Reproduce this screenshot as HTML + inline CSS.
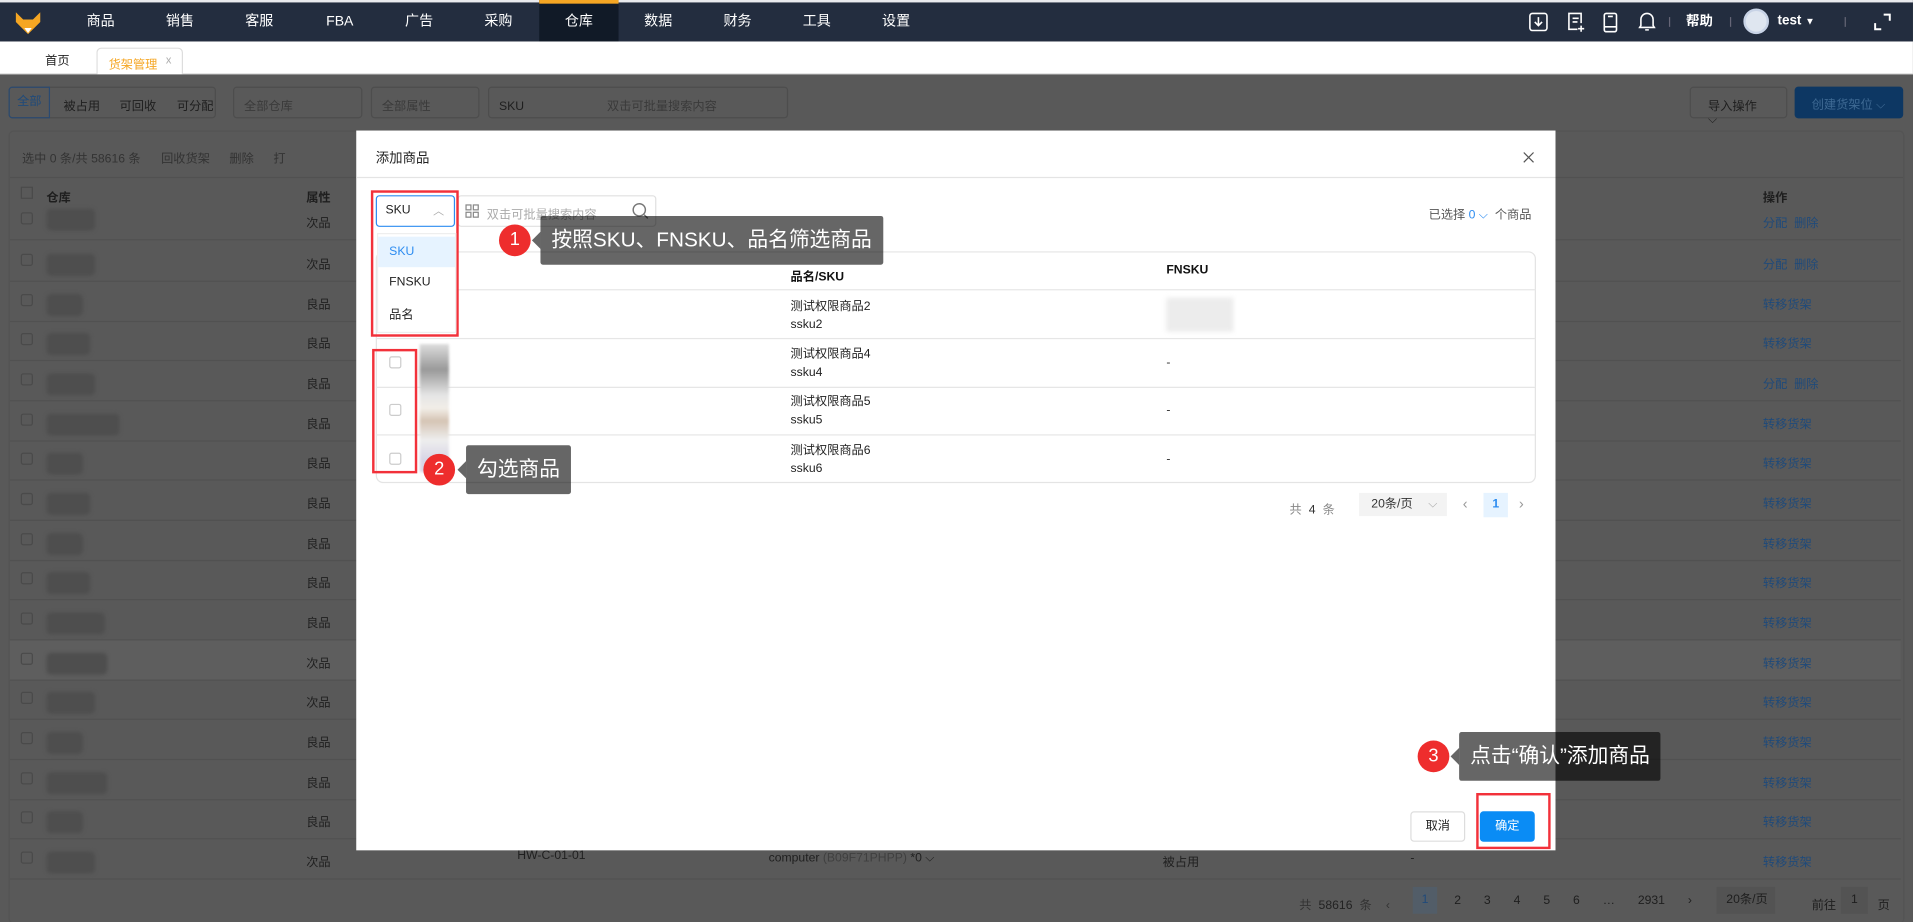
<!DOCTYPE html>
<html><head><meta charset="utf-8"><style>
*{box-sizing:border-box;margin:0;padding:0}
body{width:1913px;height:922px;overflow:hidden;background:#595959;font-family:"Liberation Sans","Noto Sans CJK SC",sans-serif}
#w{position:absolute;left:0;top:0;width:1568px;height:756px;transform:scale(1.22);transform-origin:0 0;overflow:hidden}
.a{position:absolute}
.nav{left:0;top:0;width:1568px;height:34px;background:#232d3f;border-top:2px solid #e9eaee}
.ni{position:absolute;top:0;height:32px;line-height:32px;color:#fff;font-size:11.5px;text-align:center;width:65px}
.tabs{left:0;top:34px;width:1568px;height:27px;background:#fff;border-bottom:1px solid #ddd;font-size:10px}
.ov{left:0;top:61px;width:1568px;height:695px;background:#595959}
.t{font-size:10px;color:#1e1e1e}
.bx{border:1px solid #4d4d4d;border-radius:3px}
.row{position:absolute;left:8px;width:1550px;height:32.7px;border-bottom:1px solid #515151;font-size:10px;color:#1f1f1f}
.row span{position:absolute;top:10px}
.cb{position:absolute;left:9px;top:11px;width:10px;height:10px;border:1px solid #4a4a4a;border-radius:2px}
.blur{position:absolute;left:30px;top:6px;height:18px;background:#4e4e4e;border-radius:4px;filter:blur(1.5px)}
.lk{color:#1f4a7a}
.modal{left:292px;top:107px;width:983px;height:590px;background:#fff}
.m{font-size:10px;color:#333}
.red{position:absolute;border:2px solid #f2313a}
.call{position:absolute;background:rgba(0,0,0,.6);color:#fff;font-size:17px;line-height:40px;padding:0 9px;height:40px;border-radius:2px;white-space:nowrap}
.call:before{content:"";position:absolute;left:-7px;top:13px;border:7px solid transparent;border-left:0;border-right-color:rgba(0,0,0,.6)}
.num{position:absolute;width:26px;height:26px;border-radius:50%;background:#ee2d2d;color:#fff;font-size:15px;text-align:center;line-height:26px}
</style></head><body><div id="w">
<div class="a nav">
<svg class="a" style="left:12px;top:8px" width="22" height="18" viewBox="0 0 22 18"><path d="M1 0 L7 6 L15 6 L21 0 L21 8 L11 18 L1 8Z" fill="#f5a623"/><path d="M8 13 L14 13 L11 17Z" fill="#fff"/></svg>
<div class="ni" style="left:50px">商品</div><div class="ni" style="left:115px">销售</div><div class="ni" style="left:180px">客服</div><div class="ni" style="left:246px">FBA</div><div class="ni" style="left:311px">广告</div><div class="ni" style="left:376px">采购</div>
<div class="ni" style="left:442px;background:#111a27;border-top:3px solid #f5a623;top:-2px;height:34px;line-height:30px">仓库</div>
<div class="ni" style="left:507px">数据</div><div class="ni" style="left:572px">财务</div><div class="ni" style="left:637px">工具</div><div class="ni" style="left:702px">设置</div>
<svg class="a" style="left:1253px;top:8px" width="16" height="16" viewBox="0 0 16 16" fill="none" stroke="#fff" stroke-width="1.3"><rect x="1" y="1" width="14" height="14" rx="2"/><path d="M8 4v7M5 8l3 3 3-3"/></svg>
<svg class="a" style="left:1284px;top:8px" width="16" height="17" viewBox="0 0 16 17" fill="none" stroke="#fff" stroke-width="1.3"><path d="M12 9V1H2v13h7"/><path d="M5 5h5M5 8h4M12 11v5M9.5 13.5h5"/></svg>
<svg class="a" style="left:1314px;top:8px" width="12" height="17" viewBox="0 0 12 17" fill="none" stroke="#fff" stroke-width="1.3"><rect x="1" y="1" width="10" height="15" rx="1.5"/><path d="M1 12h10M4 3.5h4"/></svg>
<svg class="a" style="left:1343px;top:7px" width="14" height="17" viewBox="0 0 14 17" fill="none" stroke="#fff" stroke-width="1.3"><path d="M2 12V7a5 5 0 0 1 10 0v5l1 1.5H1Z"/><path d="M5.5 15.5h3"/></svg>
<div class="a" style="left:1368px;top:12px;width:1px;height:8px;background:#667"></div>
<div class="a" style="left:1382px;top:0;line-height:32px;color:#fff;font-size:11px;font-weight:bold">帮助</div>
<div class="a" style="left:1418px;top:12px;width:1px;height:8px;background:#667"></div>
<div class="a" style="left:1429px;top:5px;width:21px;height:21px;border-radius:50%;background:#dfe6f0;border:2px solid #c8d3e6"></div>
<div class="a" style="left:1457px;top:0;line-height:30px;color:#fff;font-size:11px;font-weight:bold">test <span style="font-size:8px">▼</span></div>
<div class="a" style="left:1512px;top:12px;width:1px;height:8px;background:#667"></div>
<svg class="a" style="left:1536px;top:9px" width="14" height="14" viewBox="0 0 14 14" fill="none" stroke="#fff" stroke-width="1.6"><path d="M8 1h5v5M1 8v5h5"/></svg>
</div>
<div class="a tabs">
<div class="a" style="left:37px;top:7px;color:#222">首页</div>
<div class="a" style="left:79px;top:5px;width:71px;height:22px;border:1px solid #ddd;border-bottom:none;border-radius:4px 4px 0 0;background:#fff"><span style="position:absolute;left:9px;top:4px;color:#f5a623">货架管理</span><span style="position:absolute;left:56px;top:4px;color:#aaa;font-size:9px">x</span></div>
</div>
<div class="a ov">
<div class="a bx t" style="left:7px;top:10px;width:170px;height:26px"></div>
<div class="a t" style="left:7px;top:10px;width:34px;height:26px;border:1px solid #2b4a70;color:#1f4a7a;line-height:24px;text-align:center;border-radius:3px 0 0 3px">全部</div>
<div class="a t" style="left:52px;top:17px">被占用</div><div class="a t" style="left:98px;top:17px">可回收</div><div class="a t" style="left:145px;top:17px">可分配</div>
<div class="a bx t" style="left:191px;top:10px;width:106px;height:26px;padding:6px 8px;color:#3a3a3a">全部仓库</div>
<div class="a bx t" style="left:304px;top:10px;width:89px;height:26px;padding:6px 8px;color:#3a3a3a">全部属性</div>
<div class="a bx t" style="left:400px;top:10px;width:246px;height:26px;padding:6px 8px">SKU<span style="margin-left:68px;color:#3a3a3a">双击可批量搜索内容</span></div>
<div class="a bx t" style="left:1385px;top:10px;width:80px;height:26px;padding:6px 14px">导入操作 ⌵</div>
<div class="a t" style="left:1471px;top:10px;width:89px;height:26px;padding:6px 14px;background:#0d3763;color:#3f6a94;border-radius:3px">创建货架位 ⌵</div>
<div class="a" style="left:7px;top:46px;width:1554px;height:650px;border:1px solid #545454;border-radius:4px"></div>
<div class="a t" style="left:18px;top:60px;color:#333">选中 0 条/共 58616 条 <span style="margin-left:14px">回收货架</span><span style="margin-left:16px">删除</span><span style="margin-left:16px">打</span></div>
<div class="a" style="left:8px;top:84px;width:1552px;height:1px;background:#515151"></div>
<div class="a t" style="left:17px;top:92px;width:10px;height:10px;border:1px solid #4a4a4a"></div>
<div class="a t" style="left:38px;top:92px;font-weight:bold">仓库</div><div class="a t" style="left:251px;top:92px;font-weight:bold">属性</div><div class="a t" style="left:1445px;top:92px;font-weight:bold">操作</div>
<div class="row" style="top:108px;height:28px"><span class="cb" style="top:5px"></span><span class="blur" style="width:40px;top:2px"></span><span style="left:243px;top:5px">次品</span><span class="lk" style="left:1437px;top:5px">分配 &nbsp;删除</span></div>
<div class="row" style="top:137px"><span class="cb"></span><span class="blur" style="width:40px"></span><span style="left:243px">次品</span><span class="lk" style="left:1437px">分配 &nbsp;删除</span></div>
<div class="row" style="top:170px"><span class="cb"></span><span class="blur" style="width:30px"></span><span style="left:243px">良品</span><span class="lk" style="left:1437px">转移货架</span></div>
<div class="row" style="top:202px"><span class="cb"></span><span class="blur" style="width:36px"></span><span style="left:243px">良品</span><span class="lk" style="left:1437px">转移货架</span></div>
<div class="row" style="top:235px"><span class="cb"></span><span class="blur" style="width:40px"></span><span style="left:243px">良品</span><span class="lk" style="left:1437px">分配 &nbsp;删除</span></div>
<div class="row" style="top:268px"><span class="cb"></span><span class="blur" style="width:60px"></span><span style="left:243px">良品</span><span class="lk" style="left:1437px">转移货架</span></div>
<div class="row" style="top:300px"><span class="cb"></span><span class="blur" style="width:30px"></span><span style="left:243px">良品</span><span class="lk" style="left:1437px">转移货架</span></div>
<div class="row" style="top:333px"><span class="cb"></span><span class="blur" style="width:36px"></span><span style="left:243px">良品</span><span class="lk" style="left:1437px">转移货架</span></div>
<div class="row" style="top:366px"><span class="cb"></span><span class="blur" style="width:30px"></span><span style="left:243px">良品</span><span class="lk" style="left:1437px">转移货架</span></div>
<div class="row" style="top:398px"><span class="cb"></span><span class="blur" style="width:36px"></span><span style="left:243px">良品</span><span class="lk" style="left:1437px">转移货架</span></div>
<div class="row" style="top:431px"><span class="cb"></span><span class="blur" style="width:48px"></span><span style="left:243px">良品</span><span class="lk" style="left:1437px">转移货架</span></div>
<div class="row" style="top:464px;background:#5e5e5e"><span class="cb"></span><span class="blur" style="width:50px"></span><span style="left:243px">次品</span><span class="lk" style="left:1437px">转移货架</span></div>
<div class="row" style="top:496px"><span class="cb"></span><span class="blur" style="width:40px"></span><span style="left:243px">次品</span><span class="lk" style="left:1437px">转移货架</span></div>
<div class="row" style="top:529px"><span class="cb"></span><span class="blur" style="width:30px"></span><span style="left:243px">良品</span><span class="lk" style="left:1437px">转移货架</span></div>
<div class="row" style="top:562px"><span class="cb"></span><span class="blur" style="width:50px"></span><span style="left:243px">良品</span><span class="lk" style="left:1437px">转移货架</span></div>
<div class="row" style="top:594px"><span class="cb"></span><span class="blur" style="width:30px"></span><span style="left:243px">良品</span><span class="lk" style="left:1437px">转移货架</span></div>
<div class="row" style="top:627px"><span class="cb"></span><span class="blur" style="width:40px"></span><span style="left:243px">次品</span><span style="left:416px;top:8px">HW-C-01-01</span><span style="left:622px">computer <span style="position:static;color:#3f3f3f">(B09F71PHPP)</span> *0 ⌵</span><span style="left:945px">被占用</span><span style="left:1148px">-</span><span class="lk" style="left:1437px">转移货架</span></div>
<div class="a t" style="left:1065px;top:672px;color:#333;word-spacing:3px">共 <b style="font-weight:normal;color:#222">58616</b> 条 &nbsp;‹</div>
<div class="a t" style="left:1158px;top:666px;width:20px;height:22px;background:#525d68;color:#1f4a7a;text-align:center;line-height:22px">1</div>
<div class="a t" style="left:1192px;top:672px;word-spacing:16px">2 3 4 5 6 … 2931 ›</div>
<div class="a t" style="left:1407px;top:666px;width:48px;height:22px;background:#535353;line-height:22px;padding-left:8px">20条/页 ⌵</div>
<div class="a t" style="left:1485px;top:672px">前往</div>
<div class="a t" style="left:1509px;top:666px;width:22px;height:22px;background:#535353;line-height:22px;text-align:center">1</div>
<div class="a t" style="left:1539px;top:672px">页</div>
</div>
<div class="a modal">
<div class="a m" style="left:16px;top:14px;font-size:11px;color:#222">添加商品</div>
<svg class="a" style="left:956px;top:17px" width="10" height="10" viewBox="0 0 10 10" stroke="#555" stroke-width="1"><path d="M1 1l8 8M9 1l-8 8"/></svg>
<div class="a" style="left:0;top:38px;width:983px;height:1px;background:#e4e4e4"></div>
<div class="a m" style="left:16px;top:53px;width:65px;height:26px;border:1px solid #2d8cf0;border-radius:3px;padding:6px 7px;color:#222">SKU<span style="position:absolute;right:8px;top:5px;color:#aaa;font-size:9px">︿</span></div>
<div class="a m" style="left:83px;top:53px;width:163px;height:26px;border:1px solid #e0e0e0;border-radius:3px;padding:6px 23px;color:#aaa">双击可批量搜索内容
<svg class="a" style="left:5px;top:6px" width="12" height="12" viewBox="0 0 12 12" fill="none" stroke="#888"><rect x="1" y="1" width="4" height="4"/><rect x="7" y="1" width="4" height="4"/><rect x="1" y="7" width="4" height="4"/><rect x="7" y="7" width="4" height="4"/></svg>
<svg class="a" style="left:142px;top:5px" width="14" height="14" viewBox="0 0 14 14" fill="none" stroke="#777" stroke-width="1.2"><circle cx="6" cy="6" r="5"/><path d="M10 10l3 3"/></svg></div>
<div class="a m" style="left:879px;top:60px;color:#555">已选择 <span style="color:#2d8cf0">0 ⌵</span> &nbsp;个商品</div>
<div class="a" style="left:16px;top:99px;width:951px;height:190px;border:1px solid #e4e4e4;border-radius:6px"></div>
<div class="a m" style="left:356px;top:111px;font-weight:bold;color:#111">品名/SKU</div>
<div class="a m" style="left:664px;top:109px;font-weight:bold;color:#111">FNSKU</div>
<div class="a" style="left:16px;top:130px;width:951px;height:1px;background:#e6e6e6"></div>
<div class="a" style="left:16px;top:170px;width:951px;height:1px;background:#e6e6e6"></div>
<div class="a" style="left:16px;top:210px;width:951px;height:1px;background:#e6e6e6"></div>
<div class="a" style="left:16px;top:249px;width:951px;height:1px;background:#e6e6e6"></div>
<div class="a m" style="left:356px;top:137px;line-height:15px;color:#222">测试权限商品2<br>ssku2</div>
<div class="a m" style="left:356px;top:176px;line-height:15px;color:#222">测试权限商品4<br>ssku4</div>
<div class="a m" style="left:356px;top:215px;line-height:15px;color:#222">测试权限商品5<br>ssku5</div>
<div class="a m" style="left:356px;top:255px;line-height:15px;color:#222">测试权限商品6<br>ssku6</div>
<div class="a" style="left:664px;top:137px;width:55px;height:28px;background:#ececec;filter:blur(2px)"></div>
<div class="a m" style="left:664px;top:185px">-</div><div class="a m" style="left:664px;top:224px">-</div><div class="a m" style="left:664px;top:264px">-</div>
<div class="a" style="left:27px;top:185px;width:10px;height:10px;border:1px solid #ccc;border-radius:2px"></div>
<div class="a" style="left:27px;top:224px;width:10px;height:10px;border:1px solid #ccc;border-radius:2px"></div>
<div class="a" style="left:27px;top:264px;width:10px;height:10px;border:1px solid #ccc;border-radius:2px"></div>
<div class="a" style="left:52px;top:175px;width:24px;height:105px;background:linear-gradient(#ddd,#999 20%,#e5e5e5 40%,#f2eee8 50%,#d5c4b4 60%,#eee 75%,#d8d5e5 90%);filter:blur(1px)"></div>
<div class="a m" style="left:765px;top:302px;color:#888;word-spacing:3px">共 <span style="color:#333">4</span> 条</div>
<div class="a m" style="left:822px;top:297px;width:72px;height:19px;background:#f3f3f3;line-height:19px;padding-left:10px;color:#333">20条/页 <span style="color:#aaa;margin-left:10px">⌵</span></div>
<div class="a m" style="left:907px;top:299px;color:#999;font-size:12px">‹</div>
<div class="a m" style="left:924px;top:297px;width:20px;height:20px;background:#e6f3ff;color:#2d8cf0;text-align:center;line-height:20px;font-weight:bold">1</div>
<div class="a m" style="left:953px;top:299px;color:#999;font-size:12px">›</div>
<div class="a m" style="left:864px;top:558px;width:45px;height:25px;border:1px solid #ddd;border-radius:3px;text-align:center;line-height:23px;color:#222">取消</div>
<div class="a m" style="left:921px;top:558px;width:45px;height:25px;background:#0a8cf5;border-radius:3px;text-align:center;line-height:25px;color:#fff">确定</div>
</div>
<div class="red" style="left:304px;top:156px;width:72px;height:120px"></div>
<div class="a" style="left:309px;top:191px;width:65px;height:82px;background:#fff;border:1px solid #eee;font-size:10px">
<div style="height:25px;background:#e6f3ff;color:#2d8cf0;padding:7px 9px;margin-top:2px">SKU</div>
<div style="height:26px;padding:7px 9px;color:#222">FNSKU</div>
<div style="padding:4px 9px;color:#222">品名</div></div>
<div class="red" style="left:305px;top:286px;width:37px;height:102px"></div>
<div class="red" style="left:1210px;top:650px;width:61px;height:46px"></div>
<div class="num" style="left:409px;top:184px">1</div>
<div class="call" style="left:443px;top:177px">按照SKU、FNSKU、品名筛选商品</div>
<div class="num" style="left:347px;top:372px">2</div>
<div class="call" style="left:382px;top:365px">勾选商品</div>
<div class="num" style="left:1162px;top:607px">3</div>
<div class="call" style="left:1196px;top:600px">点击“确认”添加商品</div>
</div></body></html>
